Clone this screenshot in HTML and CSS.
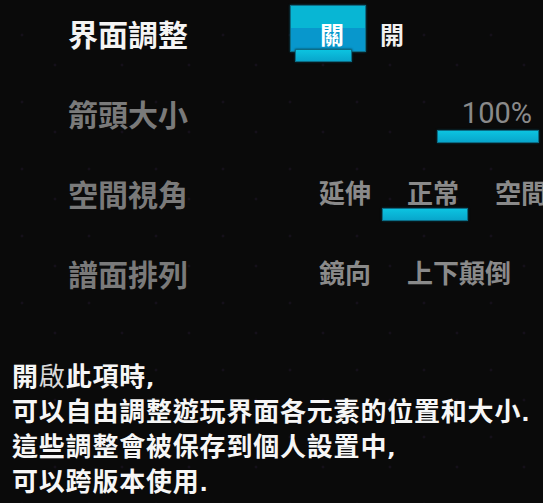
FILE: index.html
```html
<!DOCTYPE html>
<html lang="zh-Hant">
<head>
<meta charset="utf-8">
<title>界面調整</title>
<link rel="stylesheet" href="styles.css">
</head>
<body>
<div class="screen">
  <div class="settings">
    <div class="row">
      <div class="label active">界面調整</div>
      <div class="controls">
        <div class="toggle">
          <div class="seg on">關<span class="tab"></span></div>
          <div class="seg off">開</div>
        </div>
      </div>
    </div>
    <div class="row">
      <div class="label">箭頭大小</div>
      <div class="controls">
        <div class="slider">
          <div class="value">100%</div>
          <div class="bar"></div>
        </div>
      </div>
    </div>
    <div class="row">
      <div class="label">空間視角</div>
      <div class="controls">
        <div class="options">
          <div class="opt">延伸</div>
          <div class="opt selected">正常<span class="bar"></span></div>
          <div class="opt">空間</div>
        </div>
      </div>
    </div>
    <div class="row">
      <div class="label">譜面排列</div>
      <div class="controls">
        <div class="options">
          <div class="opt">鏡向</div>
          <div class="opt">上下顛倒</div>
        </div>
      </div>
    </div>
  </div>
  <div class="desc">
    <p>開<span class="thin">啟</span>此項時<span class="latin">,</span></p>
    <p>可以自由調整遊玩界面各元素的位置和大小<span class="latin">.</span></p>
    <p>這些調整會被保存到個人設置中<span class="latin">,</span></p>
    <p>可以跨版本使用<span class="latin">.</span></p>
  </div>
</div>
</body>
</html>
```
FILE: styles.css
```css
html, body {
  margin: 0;
  padding: 0;
  background: #0a0a0a;
}
.screen {
  width: 543px;
  height: 503px;
  overflow: hidden;
  position: relative;
  background-color: #0a0a0a;
  background-image:
    radial-gradient(circle at 22px 35px, #15101a 0, #15101a 1px, transparent 1.8px),
    radial-gradient(circle at 55px 65px, #15101a 0, #15101a 1px, transparent 1.8px);
  background-size: 67px 67px;
  font-family: "Noto Sans CJK TC", "Noto Sans", sans-serif;
  color: #f2f2f2;
}
.settings {
  display: flex;
  flex-direction: column;
  margin-top: -5px;
}
.row {
  display: flex;
  height: 80px;
}
.label {
  width: 290px;
  flex: none;
  box-sizing: border-box;
  padding-left: 68px;
  padding-top: 23px;
  font-size: 30px;
  line-height: 30px;
  font-weight: 700;
  color: #7a7a7a;
  white-space: nowrap;
}
.label.active {
  color: #f4f4f4;
}
.controls {
  flex: 1;
  display: flex;
  min-width: 0;
}
/* toggle */
.toggle {
  display: flex;
  align-items: flex-start;
  padding-top: 10px;
}
.seg {
  font-size: 24px;
  line-height: 24px;
  font-weight: 700;
}
.seg.on {
  position: relative;
  width: 76px;
  height: 47px;
  box-sizing: border-box;
  padding-top: 16px;
  padding-left: 29px;
  background: linear-gradient(#08b6d4 0, #08b6d4 48%, #0897cc 48%, #0897cc 100%);
  border: 1px solid #0d6f88;
  box-shadow: 0 0 2px #07566a;
  color: #ffffff;
}
.seg.on .tab {
  position: absolute;
  left: 4px;
  top: 43px;
  width: 57px;
  height: 13px;
  box-sizing: border-box;
  background: linear-gradient(#0cc3e0, #08a6cc);
  border: 1px solid #0b6d86;
  box-shadow: 0 0 2px #053f4e;
}
.seg.off {
  margin-left: 14px;
  padding-top: 17px;
  color: #f0f0f0;
}
/* slider */
.slider {
  margin-left: auto;
  margin-right: 4px;
  width: 102px;
  display: flex;
  flex-direction: column;
  align-items: flex-end;
}
.slider .value {
  margin-top: 23px;
  padding-right: 7px;
  font-family: Roboto, "Noto Sans", sans-serif;
  font-size: 29px;
  line-height: 30px;
  color: #8a8a8a;
}
.slider .bar,
.opt .bar {
  display: block;
  height: 13px;
  box-sizing: border-box;
  background: linear-gradient(#0cc3e0, #08a6cc);
  border: 1px solid #0b6d86;
  box-shadow: 0 0 2px #053f4e;
}
.slider .bar {
  width: 102px;
  margin-top: 2px;
}
/* options */
.options {
  display: flex;
  margin-left: 4px;
}
.opt {
  position: relative;
  width: 88px;
  flex: none;
  box-sizing: border-box;
  padding-left: 25px;
  padding-top: 24px;
  font-size: 26px;
  line-height: 26px;
  font-weight: 700;
  color: #8a8a8a;
  white-space: nowrap;
}
.opt .bar {
  position: absolute;
  left: 0;
  top: 53px;
  width: 86px;
}
/* description */
.desc {
  margin-top: 44px;
  padding-left: 12px;
  font-size: 26px;
  line-height: 31px;
  font-weight: 700;
  letter-spacing: 0.8px;
  color: #f6f6f6;
}
.desc p {
  margin: 0;
  white-space: nowrap;
}
.desc .thin {
  font-weight: 400;
  color: #d8d8d8;
}
.desc .latin {
  font-family: "DejaVu Sans", sans-serif;
  font-weight: bold;
  font-size: 22px;
}
```
